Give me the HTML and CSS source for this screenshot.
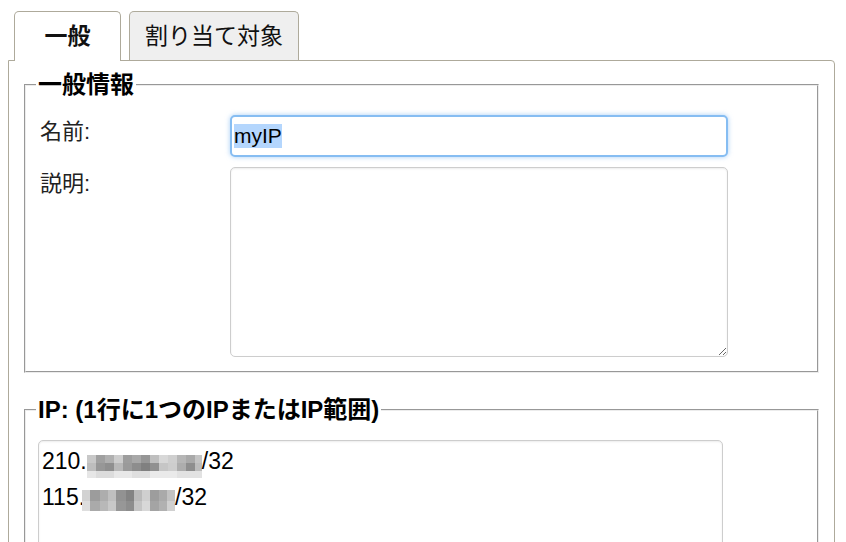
FILE: index.html
```html
<!DOCTYPE html>
<html lang="ja">
<head>
  <meta charset="UTF-8" />
  <title>IP設定</title>
  <link rel="stylesheet" href="styles.css">
</head>
<body>
  <div class="tabs">
    <div class="tab active">一般</div>
    <div class="tab">割り当て対象</div>
  </div>
  <div class="panel">
    <fieldset class="group">
      <legend>一般情報</legend>
      <div class="field">
        <label for="name">名前:</label>
        <input id="name" class="name-input" type="text" value="myIP" autofocus onfocus="this.select()">
      </div>
      <div class="field">
        <label for="desc">説明:</label>
        <textarea id="desc" class="desc-input"></textarea>
      </div>
    </fieldset>
    <fieldset class="group group-ip">
      <legend>IP: (1行に1つのIPまたはIP範囲)</legend>
      <div class="ip-list">
        <div>210.<span class="mosaic mosaic-a"></span>/32</div>
        <div>115.<span class="mosaic mosaic-b"></span>/32</div>
      </div>
    </fieldset>
  </div>
  <script>
    document.getElementById("name").select();
  </script>
</body>
</html>
```

FILE: styles.css
```css
body {
  margin: 8px;
  font-family: "Liberation Sans", "Noto Sans CJK JP", sans-serif;
  color: #111;
  background: #fff;
}
.tabs {
  display: flex;
  gap: 8px;
  padding: 3px 0 0 6px;
}
.tab {
  height: 48px;
  line-height: 48px;
  padding: 0 15px;
  min-width: 75px;
  text-align: center;
  font-size: 23px;
  color: #111;
  background: #efefef;
  border: 1px solid #aeaa9b;
  border-bottom: none;
  border-radius: 5px 5px 0 0;
}
.tab.active {
  position: relative;
  z-index: 1;
  height: 49px;
  margin-bottom: -1px;
  font-weight: bold;
  background: #fff;
}
.panel {
  margin-right: 3px;
  padding: 10px 15px 20px;
  border: 1px solid #aeaa9b;
  border-radius: 0 4px 0 0;
}
.group {
  margin: 0;
  padding: 16px 12px 14px 10px;
  border: 2px groove #ececec;
}
.group legend {
  padding: 0 2px;
  font-size: 24px;
  line-height: 28px;
  font-weight: bold;
  color: #000;
}
.group-ip {
  margin-top: 23px;
}
.field {
  display: grid;
  grid-template-columns: 194px 498px;
  align-items: start;
}
.field + .field {
  margin-top: 10px;
}
.field label {
  padding: 2px 0 0 4px;
  font-size: 22px;
  line-height: 30px;
  color: #222;
}
.name-input {
  box-sizing: border-box;
  width: 498px;
  height: 42px;
  padding: 0 2px;
  font: 21px "Liberation Sans", sans-serif;
  color: #000;
  border: 2px solid #86bdf2;
  border-radius: 5px;
  box-shadow: 0 0 5px rgba(110, 175, 240, 0.6);
  outline: none;
}
.name-input::selection {
  background: #b4d6fd;
  color: #000;
}
.desc-input {
  box-sizing: border-box;
  width: 498px;
  height: 190px;
  border: 1px solid #cdcdcd;
  border-radius: 5px;
  box-shadow: inset 0 1px 2px rgba(0, 0, 0, 0.08);
}
.ip-list {
  box-sizing: border-box;
  width: 685px;
  height: 150px;
  margin-left: 2px;
  padding: 2px 3px 0;
  font-size: 23px;
  line-height: 36px;
  color: #000;
  border: 1px solid #cdcdcd;
  border-radius: 5px;
  box-shadow: inset 0 1px 2px rgba(0, 0, 0, 0.08);
}
.mosaic {
  display: inline-block;
}
.mosaic-a {
  width: 115px;
  height: 23px;
  vertical-align: -9px;
  background:
    linear-gradient(to right, #c8c8c8 0 9px, #a0a0a0 9px 18px, #b0b0b0 18px 27px, #cdcdcd 27px 36px, #9d9d9d 36px 45px, #a8a8a8 45px 54px, #969696 54px 63px, #bfbfbf 63px 72px, #d8d8d8 72px 81px, #cfcfcf 81px 90px, #b6b6b6 90px 99px, #a9a9a9 99px 108px, #c4c4c4 108px) 0 0 / 100% 8px no-repeat,
    linear-gradient(to right, #bdbdbd 0 9px, #979797 9px 18px, #8f8f8f 18px 27px, #b8b8b8 27px 36px, #9a9a9a 36px 45px, #8d8d8d 45px 54px, #808080 54px 63px, #909090 63px 72px, #c6c6c6 72px 81px, #cdcdcd 81px 90px, #adadad 90px 99px, #8e8e8e 99px 108px, #bcbcbc 108px) 0 8px / 100% 8px no-repeat,
    linear-gradient(to right, #e6e6e6 0 9px, #dcdcdc 9px 27px, #e8e8e8 27px 45px, #dfdfdf 45px 63px, #eaeaea 63px 90px, #e2e2e2 90px) 0 16px / 100% 7px no-repeat;
}
.mosaic-b {
  width: 93px;
  height: 21px;
  margin-left: -3px;
  vertical-align: -6px;
  background:
    linear-gradient(to right, #d2d2d2 0 8px, #9c9c9c 8px 18px, #adadad 18px 26px, #bfbfbf 26px 34px, #929292 34px 44px, #838383 44px 52px, #bababa 52px 60px, #cfcfcf 60px 68px, #9d9d9d 68px 77px, #aaaaaa 77px 85px, #c2c2c2 85px) 0 0 / 100% 11px no-repeat,
    linear-gradient(to right, #dedede 0 8px, #aaaaaa 8px 18px, #b8b8b8 18px 26px, #c8c8c8 26px 34px, #979797 34px 44px, #8d8d8d 44px 52px, #c5c5c5 52px 60px, #d8d8d8 60px 68px, #a4a4a4 68px 77px, #b1b1b1 77px 85px, #d0d0d0 85px) 0 11px / 100% 10px no-repeat;
}
```
